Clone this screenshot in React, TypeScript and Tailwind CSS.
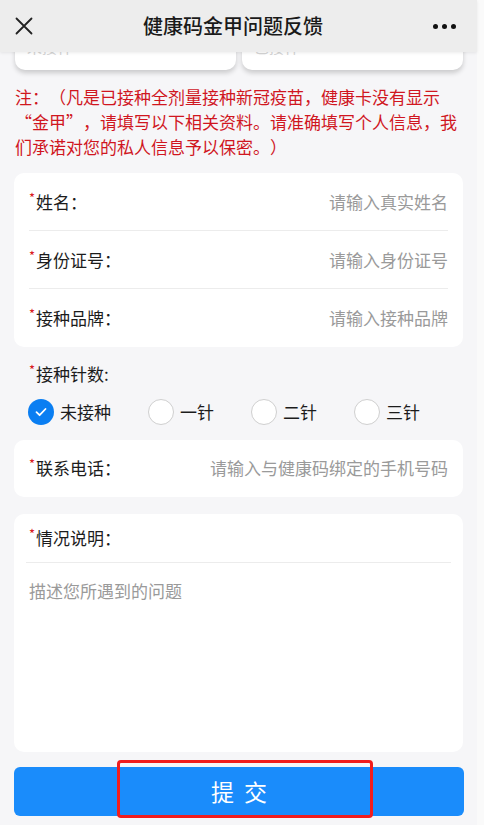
function Star() {
  return <span className="mr-[1px] self-start pt-[2px] text-[13px] leading-none text-[#d9141c]">*</span>
}

function Row({ label, placeholder, divider }: { label: string; placeholder: string; divider?: boolean }) {
  return (
    <div className={`flex h-[58px] items-center justify-between ${divider ? 'border-b border-[#ececec]' : ''}`}>
      <div className="flex items-center text-[17px] text-[#1c1c1c]">
        <Star />
        <span>{label}：</span>
      </div>
      <span className="text-[17px] text-[#9a9a9a]">{placeholder}</span>
    </div>
  )
}

function Radio({ label, checked }: { label: string; checked?: boolean }) {
  return (
    <div className="flex items-center gap-[6px]">
      {checked ? (
        <span className="flex h-[26px] w-[26px] items-center justify-center rounded-full bg-[#0a7ef2]">
          <svg width="14" height="14" viewBox="0 0 14 14" fill="none">
            <path d="M2.5 7.2 5.6 10.2 11.5 4" stroke="white" strokeWidth="1.8" strokeLinecap="round" strokeLinejoin="round" />
          </svg>
        </span>
      ) : (
        <span className="h-[26px] w-[26px] rounded-full border border-[#cfcfcf] bg-white" />
      )}
      <span className="text-[17px] text-[#1c1c1c]">{label}</span>
    </div>
  )
}

export default function App() {
  return (
    <div lang="zh-CN" className="flex min-h-[825px] w-[484px] overflow-hidden bg-[#fafafa] font-['Noto_Sans_CJK_SC',sans-serif] [text-spacing-trim:space-all]">
      <div className="w-[477px] bg-[#f6f6f8]">
        <header className="relative z-10 flex h-[52px] items-center justify-between bg-[#ededed] px-[15px] shadow-[0_1px_3px_rgba(0,0,0,0.08)]">
          <svg width="18" height="18" viewBox="0 0 18 18" fill="none">
            <path d="M1.5 1.5 16.5 16.5M16.5 1.5 1.5 16.5" stroke="#222" strokeWidth="1.8" strokeLinecap="round" />
          </svg>
          <h1 className="text-[20px] font-medium text-[#1a1a1a]">健康码金甲问题反馈</h1>
          <div className="flex gap-[4px] pr-[6px]">
            <span className="h-[5px] w-[5px] rounded-full bg-[#111]" />
            <span className="h-[5px] w-[5px] rounded-full bg-[#111]" />
            <span className="h-[5px] w-[5px] rounded-full bg-[#111]" />
          </div>
        </header>

        <div className="-mt-[22px] flex gap-[6px] pl-[15px] pr-[14px]">
          <div className="h-[40px] flex-1 overflow-hidden rounded-[10px] bg-white pl-[12px] pt-[6px] text-[15px] text-[#d4d4d4] shadow-[0_3px_5px_rgba(0,0,0,0.18)]">
            未接种
          </div>
          <div className="h-[40px] flex-1 overflow-hidden rounded-[10px] bg-white pl-[12px] pt-[6px] text-[15px] text-[#d4d4d4] shadow-[0_3px_5px_rgba(0,0,0,0.18)]">
            已接种
          </div>
        </div>

        <p className="mt-[14px] pl-[15px] pr-[10px] text-[17px] leading-[25px] text-[#d0161f]">
          注：（凡是已接种全剂量接种新冠疫苗，健康卡没有显示“金甲”，请填写以下相关资料。请准确填写个人信息，我们承诺对您的私人信息予以保密。）
        </p>

        <div className="mx-[14px] mt-[14px] rounded-[10px] bg-white px-[15px]">
          <Row label="姓名" placeholder="请输入真实姓名" divider />
          <Row label="身份证号" placeholder="请输入身份证号" divider />
          <Row label="接种品牌" placeholder="请输入接种品牌" />
        </div>

        <div className="px-[29px] pt-[14px]">
          <div className="flex items-center text-[17px] text-[#1c1c1c]">
            <Star />
            <span>接种针数:</span>
          </div>
          <div className="mt-[12px] -ml-[1px] flex items-center gap-[37px]">
            <Radio label="未接种" checked />
            <Radio label="一针" />
            <Radio label="二针" />
            <Radio label="三针" />
          </div>
        </div>

        <div className="mx-[14px] mt-[15px] rounded-[10px] bg-white px-[15px]">
          <div className="flex h-[57px] items-center justify-between">
            <div className="flex items-center text-[17px] text-[#1c1c1c]">
              <Star />
              <span>联系电话：</span>
            </div>
            <span className="text-[17px] text-[#9a9a9a]">请输入与健康码绑定的手机号码</span>
          </div>
        </div>

        <div className="mx-[14px] mt-[17px] h-[238px] rounded-[10px] bg-white">
          <div className="mx-[12px] flex h-[49px] items-center border-b border-[#ececec] px-[3px]">
            <div className="flex items-center text-[17px] text-[#1c1c1c]">
              <Star />
              <span>情况说明：</span>
            </div>
          </div>
          <div className="px-[15px] pt-[15px] text-[17px] text-[#9a9a9a]">描述您所遇到的问题</div>
        </div>

        <div className="relative ml-[14px] mr-[13px] mt-[15px]">
          <button className="flex h-[49px] w-full items-center justify-center rounded-[6px] bg-[#1a8cfb] text-[23px] tracking-[10px] text-white">
            <span className="pl-[10px]">提交</span>
          </button>
          <div className="absolute left-[103px] top-[-7px] h-[58px] w-[256px] rounded-[4px] border-[3px] border-[#f21d1d]" />
        </div>
      </div>
    </div>
  )
}
